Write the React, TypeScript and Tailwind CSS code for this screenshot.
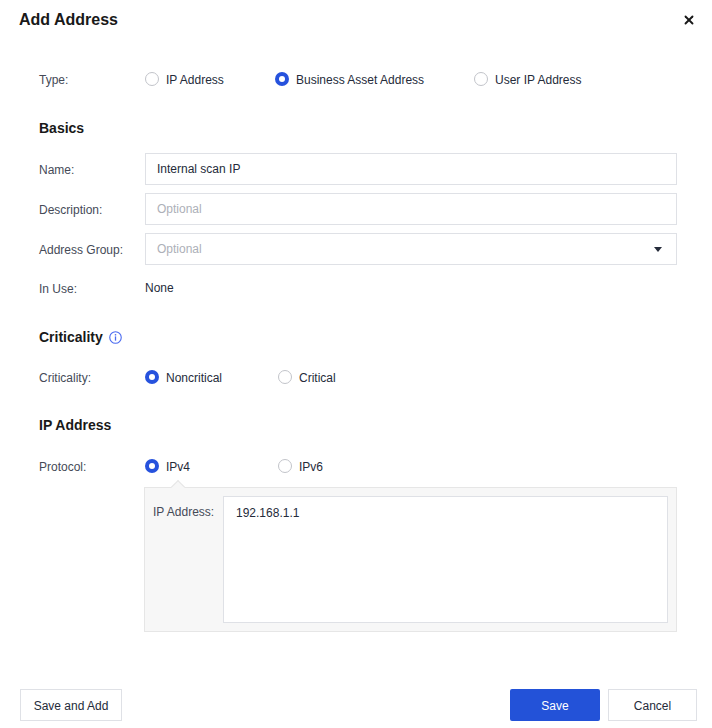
import { X } from "lucide-react";

type Option = { label: string; checked?: boolean; width: string };

const typeOptions: Option[] = [
  { label: "IP Address", width: "w-[130px]" },
  { label: "Business Asset Address", checked: true, width: "w-[199px]" },
  { label: "User IP Address", width: "w-auto" },
];

const criticalityOptions: Option[] = [
  { label: "Noncritical", checked: true, width: "w-[133px]" },
  { label: "Critical", width: "w-auto" },
];

const protocolOptions: Option[] = [
  { label: "IPv4", checked: true, width: "w-[133px]" },
  { label: "IPv6", width: "w-auto" },
];

function Radio({ checked }: { checked?: boolean }) {
  return checked ? (
    <span className="flex h-[14px] w-[14px] items-center justify-center rounded-full bg-[#2652dd]">
      <span className="h-[6px] w-[6px] rounded-full bg-white" />
    </span>
  ) : (
    <span className="h-[14px] w-[14px] rounded-full border border-[#c2c4ca] bg-white" />
  );
}

function RadioGroup({ options }: { options: Option[] }) {
  return (
    <div className="flex items-center">
      {options.map((o) => (
        <label key={o.label} className={`flex items-center gap-[7px] ${o.width}`}>
          <Radio checked={o.checked} />
          <span className="pt-px text-[#252b3a]">{o.label}</span>
        </label>
      ))}
    </div>
  );
}

function Row({ label, children, className = "" }: { label: string; children: React.ReactNode; className?: string }) {
  return (
    <div className={`flex h-8 items-center ${className}`}>
      <span className="w-[106px] shrink-0 pt-px text-[#454a57]">{label}</span>
      <div className="flex-1">{children}</div>
    </div>
  );
}

function Field({ value, placeholder, select }: { value?: string; placeholder?: string; select?: boolean }) {
  return (
    <div className="flex h-8 items-center justify-between border border-[#dfe1e6] bg-white pl-[11px] pr-[14px]">
      <span className={value ? "text-[#252b3a]" : "text-[#adb0b8]"}>{value ?? placeholder}</span>
      {select && (
        <svg width="8" height="5" viewBox="0 0 8 5">
          <path d="M0 0h8L4 5z" fill="#252b3a" />
        </svg>
      )}
    </div>
  );
}

function Heading({ children, className = "" }: { children: React.ReactNode; className?: string }) {
  return (
    <div className={`flex h-8 items-center gap-[6px] pt-px text-[14px] font-bold text-[#191919] ${className}`}>
      {children}
    </div>
  );
}

export default function App() {
  return (
    <div
      className="flex h-[728px] w-[712px] flex-col bg-white text-[12px] text-[#252b3a]"
      style={{ fontFamily: '"Liberation Sans", Arial, sans-serif' }}
    >
      <div className="flex h-[38px] items-center justify-between pl-[19px] pr-[16px] pt-px">
        <span className="text-[16px] font-bold text-[#191919]">Add Address</span>
        <X className="h-[14px] w-[14px] text-[#191919]" strokeWidth={3.2} />
      </div>

      <div className="pl-[39px] pr-[35px]">
        <Row label="Type:" className="mt-[25px]">
          <RadioGroup options={typeOptions} />
        </Row>

        <Heading className="mt-[17px]">Basics</Heading>

        <div className="mt-[9px] flex flex-col gap-2">
          <Row label="Name:">
            <Field value="Internal scan IP" />
          </Row>
          <Row label="Description:">
            <Field placeholder="Optional" />
          </Row>
          <Row label="Address Group:">
            <Field placeholder="Optional" select />
          </Row>
        </div>

        <Row label="In Use:" className="mt-[7px]">
          <span className="pt-px text-[#252b3a]">None</span>
        </Row>

        <Heading className="mt-[17px]">
          Criticality
          <svg width="13" height="13" viewBox="0 0 14 14">
            <circle cx="7" cy="7" r="6.2" fill="none" stroke="#4b6bf0" strokeWidth="1.2" />
            <circle cx="7" cy="4" r="0.9" fill="#4b6bf0" />
            <rect x="6.3" y="5.8" width="1.4" height="4.6" fill="#4b6bf0" />
          </svg>
        </Heading>

        <Row label="Criticality:" className="mt-2">
          <RadioGroup options={criticalityOptions} />
        </Row>

        <Heading className="mt-4">IP Address</Heading>

        <Row label="Protocol:" className="mt-[9px]">
          <RadioGroup options={protocolOptions} />
        </Row>

        <div className="ml-[105px] mt-[5px]">
          <div className="relative flex h-[145px] border border-[#e6e6e6] bg-[#f7f7f7] p-2">
            <span className="absolute -top-[6px] left-[28px] h-[10px] w-[10px] rotate-45 border-l border-t border-[#e6e6e6] bg-[#f7f7f7]" />
            <span className="mt-[9px] w-[70px] shrink-0 leading-[14px] text-[#454a57]">IP Address:</span>
            <div className="flex-1 border border-[#dfe1e6] bg-white px-3 pt-[9px] leading-[14px] text-[#252b3a]">
              192.168.1.1
            </div>
          </div>
        </div>
      </div>

      <div className="mt-auto flex items-center justify-between pb-[7px] pl-[20px] pr-[15px]">
        <button className="h-8 w-[102px] border border-[#dfe1e6] bg-white pt-px text-[12px] text-[#252b3a]">
          Save and Add
        </button>
        <div className="flex gap-2">
          <button className="h-8 w-[90px] rounded-[2px] bg-[#2352d8] pt-px text-[12px] text-white">Save</button>
          <button className="h-8 w-[89px] border border-[#dfe1e6] bg-white pt-px text-[12px] text-[#252b3a]">
            Cancel
          </button>
        </div>
      </div>
    </div>
  );
}
